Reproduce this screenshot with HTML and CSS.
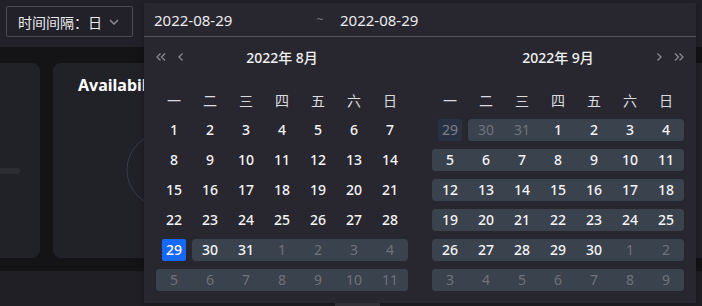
FILE: index.html
```html
<!DOCTYPE html>
<html lang="zh-CN">
<head>
    <meta charset="UTF-8">
    <meta name="viewport" content="width=device-width, initial-scale=1.0">
    <title>时间间隔</title>
    <link rel="stylesheet" href="styles.css">
</head>
<body>

    <!-- 顶部工具栏 -->
    <div class="topbar">
        <div class="select">
            <span>时间间隔：日</span>
            <svg class="chevron" width="10" height="6" viewBox="0 0 10 6"><path d="M1 1 L5 5 L9 1" fill="none" stroke="#8b8b93" stroke-width="1.5"/></svg>
        </div>
    </div>

    <!-- 卡片 -->
    <div class="cards">
        <div class="card card-small">
            <div class="bar"></div>
        </div>
        <div class="card card-main">
            <div class="card-title">Availability</div>
            <svg class="ring" width="76" height="76" viewBox="0 0 76 76"><circle cx="38" cy="38" r="37" fill="none" stroke="#3a3a43" stroke-width="1"/></svg>
        </div>
    </div>

    <div class="bottom">
        <div class="scroll-thumb"></div>
    </div>

    <!-- 日期范围弹层 -->
    <div class="picker">
        <div class="range-input">
            <span class="input">2022-08-29</span>
            <span class="sep">~</span>
            <span class="input input2">2022-08-29</span>
        </div>

        <div class="panels">
            <div class="panel">
                <div class="panel-head">
                    <div class="nav nav-left">
                        <svg width="10" height="10" viewBox="0 0 10 10"><path d="M4.5 1.5 L1 5 L4.5 8.5 M9 1.5 L5.5 5 L9 8.5" fill="none" stroke="#8a8a93" stroke-width="1.3"/></svg>
                        <svg width="6" height="10" viewBox="0 0 6 10"><path d="M4.5 1.5 L1 5 L4.5 8.5" fill="none" stroke="#8a8a93" stroke-width="1.3"/></svg>
                    </div>
                    <div class="title">2022年 8月</div>
                    <div class="nav"></div>
                </div>
                <div class="week"><span>一</span><span>二</span><span>三</span><span>四</span><span>五</span><span>六</span><span>日</span></div>
                <div class="days" id="daysLeft"></div>
            </div>

            <div class="panel">
                <div class="panel-head">
                    <div class="nav"></div>
                    <div class="title">2022年 9月</div>
                    <div class="nav nav-right">
                        <svg width="6" height="10" viewBox="0 0 6 10"><path d="M1.5 1.5 L5 5 L1.5 8.5" fill="none" stroke="#8a8a93" stroke-width="1.3"/></svg>
                        <svg width="10" height="10" viewBox="0 0 10 10"><path d="M1 1.5 L4.5 5 L1 8.5 M5.5 1.5 L9 5 L5.5 8.5" fill="none" stroke="#8a8a93" stroke-width="1.3"/></svg>
                    </div>
                </div>
                <div class="week"><span>一</span><span>二</span><span>三</span><span>四</span><span>五</span><span>六</span><span>日</span></div>
                <div class="days" id="daysRight"></div>
            </div>
        </div>
    </div>

    <script>
        // 日历单元格: [数字, 是否本月, 状态]
        function fillDays(id, cells) {
            const box = document.getElementById(id);
            cells.forEach(function (c) {
                const cell = document.createElement('div');
                cell.className = 'cell' + (c[1] ? '' : ' other') + (c[2] ? ' ' + c[2] : '');
                const num = document.createElement('span');
                num.textContent = c[0];
                cell.appendChild(num);
                box.appendChild(cell);
            });
        }

        const left = [];
        for (let d = 1; d <= 28; d++) left.push([d, true, '']);
        left.push([29, true, 'selected']);
        left.push([30, true, 'range start']);
        left.push([31, true, 'range']);
        for (let d = 1; d <= 11; d++) left.push([d, false, 'range']);
        fillDays('daysLeft', left);

        const right = [[29, false, 'hover'], [30, false, 'range start'], [31, false, 'range']];
        for (let d = 1; d <= 30; d++) right.push([d, true, 'range']);
        for (let d = 1; d <= 9; d++) right.push([d, false, 'range']);
        fillDays('daysRight', right);
    </script>

</body>
</html>
```

FILE: styles.css
```css
body {
    margin: 0;
    width: 702px;
    height: 306px;
    background-color: #141417;
    overflow: hidden;
    position: relative;
    font-family: 'Noto Sans', 'Noto Sans CJK SC', sans-serif;
    color: #f0f0f2;
}

.topbar {
    height: 47px;
    box-sizing: border-box;
    padding: 6px;
    background-color: #222129;
}

.select {
    width: 127px;
    height: 31px;
    box-sizing: border-box;
    border: 1px solid #4a4a52;
    border-radius: 2px;
    display: flex;
    align-items: center;
    justify-content: space-between;
    padding: 0 13px 0 11px;
    font-size: 14px;
    color: #ececef;
}

.cards {
    display: flex;
    gap: 13px;
    margin-top: 16px;
    height: 195px;
}

.card {
    background-color: #212128;
    border-radius: 8px;
}

.card-small {
    width: 60px;
    margin-left: -20px;
    box-sizing: border-box;
    padding-top: 105px;
}

.bar {
    width: 40px;
    height: 6px;
    border-radius: 3px;
    background-color: #2c2c33;
}

.card-main {
    flex: 1;
    margin-right: -20px;
    padding: 12px 0 0 25px;
}

.card-title {
    font-size: 16px;
    font-weight: bold;
    line-height: 20px;
    color: #ffffff;
}

.ring {
    display: block;
    margin: 37px 0 0 48px;
}

.bottom {
    margin-top: 13px;
    height: 35px;
    box-sizing: border-box;
    padding-top: 32px;
    background-color: #1f1f25;
}

.scroll-thumb {
    width: 45px;
    height: 3px;
    margin-left: 335px;
    background-color: #3a3a41;
}

/* 弹层 */
.picker {
    position: absolute;
    left: 144px;
    top: 3px;
    width: 552px;
    height: 300px;
    background-color: #28272f;
    box-shadow: 0 2px 8px rgba(0, 0, 0, 0.3);
}

.range-input {
    height: 33px;
    border-bottom: 1px solid #56565d;
    display: flex;
    align-items: center;
    padding-left: 10px;
    font-size: 15px;
    color: #ececef;
}

.input {
    width: 160px;
}

.sep {
    width: 12px;
    text-align: center;
    font-size: 12px;
    color: #77777f;
}

.input2 {
    margin-left: 14px;
}

.panels {
    display: flex;
    gap: 24px;
    padding: 0 12px;
}

.panel {
    width: 252px;
}

.panel-head {
    height: 40px;
    display: grid;
    grid-template-columns: 1fr auto 1fr;
    align-items: center;
}

.nav {
    display: flex;
    align-items: center;
    gap: 12px;
}

.nav-right {
    justify-content: flex-end;
}

.nav svg {
    display: block;
}

.title {
    font-size: 14px;
    font-weight: 500;
    color: #f2f2f4;
}

.week,
.days {
    display: grid;
    grid-template-columns: repeat(7, 36px);
}

.week {
    margin-top: 12px;
    height: 22px;
    font-size: 14px;
    color: #dcdce0;
}

.week span {
    display: flex;
    align-items: center;
    justify-content: center;
}

.days {
    margin-top: 8px;
    row-gap: 8px;
}

.cell {
    height: 22px;
    display: flex;
    align-items: center;
    justify-content: center;
    font-size: 14px;
    font-weight: 500;
    color: #f4f4f6;
}

.cell span {
    width: 24px;
    height: 22px;
    line-height: 22px;
    text-align: center;
    border-radius: 2px;
}

.cell.other {
    color: #6f727b;
    font-weight: 400;
}

.cell.range {
    background-color: #3a424d;
}

.cell.range:nth-child(7n+1),
.cell.start {
    border-radius: 4px 0 0 4px;
}

.cell.range:nth-child(7n) {
    border-radius: 0 4px 4px 0;
}

.cell.selected span {
    background-color: #1668f7;
    color: #ffffff;
}

.cell.hover span {
    background-color: #283142;
    color: #7b808b;
}
```
